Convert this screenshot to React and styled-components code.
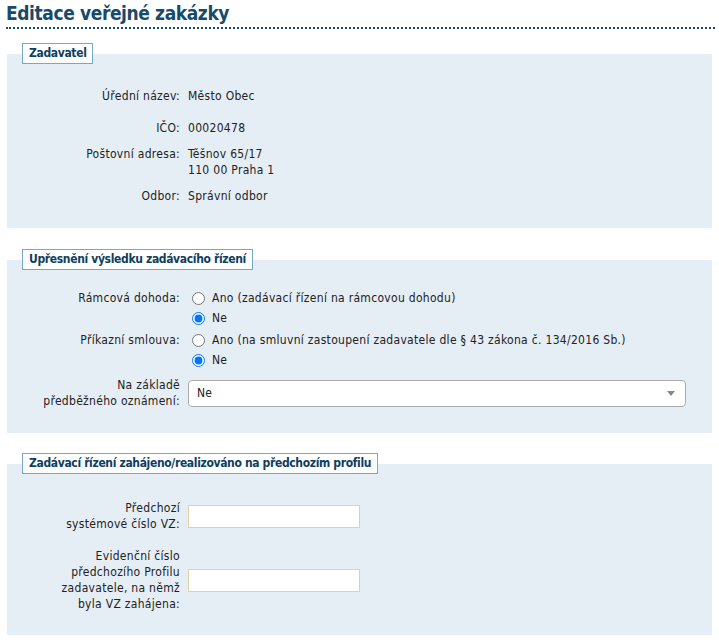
import React from "react";
import styled, { createGlobalStyle } from "styled-components";

const Global = createGlobalStyle`
  html, body { margin: 0; padding: 0; background: #fff; }
  body {
    font-family: Tahoma, "DejaVu Sans Condensed", "DejaVu Sans", sans-serif;
    font-size: 12px;
    letter-spacing: 0.3px;
    color: #222;
  }
  * { box-sizing: border-box; }
`;

const Page = styled.div`
  width: 719px;
  padding: 2px 7px 0 7px;
`;

const Title = styled.h1`
  margin: 0 0 14px -1px;
  padding: 0 0 3px 0;
  font-size: 19px;
  letter-spacing: -0.4px;
  line-height: 22px;
  font-weight: bold;
  color: #174a6c;
  border-bottom: 2px dotted #174a6c;
  width: 709px;
`;

const Fieldset = styled.fieldset`
  margin: 0 0 ${(p) => p.$mb}px 0;
  padding: 0 26px ${(p) => p.$pb}px 0;
  border: none;
  background: #e6eef5;
  width: 705px;
  min-inline-size: 0;
`;

const Legend = styled.legend`
  margin-left: 15px;
  padding: 2px 6px;
  border: 1px solid #74a9c9;
  background: #fff;
  font-weight: bold;
  font-size: 12px;
  letter-spacing: -0.35px;
  line-height: 15px;
  color: #0f3e60;
`;

const Body = styled.div`
  padding-top: ${(p) => p.$pt}px;
  display: flex;
  flex-direction: column;
`;

const Row = styled.div`
  display: grid;
  grid-template-columns: 173px 1fr;
  column-gap: 8px;
  align-items: ${(p) => p.$align || "start"};
  padding: ${(p) => p.$pad || 0}px 0;
  margin-top: ${(p) => p.$mt || 0}px;
  line-height: 16px;
`;

const Label = styled.div`
  text-align: right;
  line-height: ${(p) => p.$lh || 16}px;
`;

const Value = styled.div`
  line-height: 16px;
`;

const RadioGroup = styled.div`
  display: flex;
  flex-direction: column;
`;

const Option = styled.label`
  display: flex;
  align-items: center;
  height: 20px;
  line-height: 20px;
`;

const Radio = styled.input.attrs({ type: "radio" })`
  width: 13px;
  height: 13px;
  margin: 0 7px 0 4px;
`;

const Select = styled.div`
  height: 27px;
  border: 1px solid #aaa;
  border-radius: 4px;
  background: #fff;
  display: flex;
  align-items: center;
  justify-content: space-between;
  padding: 0 10px 0 8px;
`;

const Arrow = styled.span`
  width: 0;
  height: 0;
  border-left: 4px solid transparent;
  border-right: 4px solid transparent;
  border-top: 5px solid #888;
`;

const TextInput = styled.input.attrs({ type: "text" })`
  width: 172px;
  height: 23px;
  border: 1px solid #ddd3a8;
  background: #fff;
  margin: 0;
  padding: 0 4px;
  font: inherit;
`;

export default function App() {
  return (
    <Page>
      <Global />
      <Title>Editace veřejné zakázky</Title>

      <Fieldset $pb={19} $mb={21}>
        <Legend>Zadavatel</Legend>
        <Body $pt={19}>
          <Row $pad={5}>
            <Label>Úřední název:</Label>
            <Value>Město Obec</Value>
          </Row>
          <Row $pad={5} $mt={6}>
            <Label>IČO:</Label>
            <Value>00020478</Value>
          </Row>
          <Row $pad={5}>
            <Label>Poštovní adresa:</Label>
            <Value>
              Těšnov 65/17
              <br />
              110 00 Praha 1
            </Value>
          </Row>
          <Row $pad={5}>
            <Label>Odbor:</Label>
            <Value>Správní odbor</Value>
          </Row>
        </Body>
      </Fieldset>

      <Fieldset $pb={24} $mb={20}>
        <Legend>Upřesnění výsledku zadávacího řízení</Legend>
        <Body $pt={18}>
          <Row>
            <Label $lh={20}>Rámcová dohoda:</Label>
            <RadioGroup>
              <Option>
                <Radio name="ramcova" />
                Ano (zadávací řízení na rámcovou dohodu)
              </Option>
              <Option>
                <Radio name="ramcova" defaultChecked />
                Ne
              </Option>
            </RadioGroup>
          </Row>
          <Row $mt={2}>
            <Label $lh={20}>Příkazní smlouva:</Label>
            <RadioGroup>
              <Option>
                <Radio name="prikazni" />
                Ano (na smluvní zastoupení zadavatele dle § 43 zákona č. 134/2016 Sb.)
              </Option>
              <Option>
                <Radio name="prikazni" defaultChecked />
                Ne
              </Option>
            </RadioGroup>
          </Row>
          <Row $mt={7} $align="center">
            <Label>
              Na základě
              <br />
              předběžného oznámení:
            </Label>
            <Select>
              <span>Ne</span>
              <Arrow />
            </Select>
          </Row>
        </Body>
      </Fieldset>

      <Fieldset $pb={23} $mb={0}>
        <Legend>Zadávací řízení zahájeno/realizováno na předchozím profilu</Legend>
        <Body $pt={26}>
          <Row $align="center">
            <Label>
              Předchozí
              <br />
              systémové číslo VZ:
            </Label>
            <div>
              <TextInput />
            </div>
          </Row>
          <Row $align="center" $mt={16}>
            <Label>
              Evidenční číslo
              <br />
              předchozího Profilu
              <br />
              zadavatele, na němž
              <br />
              byla VZ zahájena:
            </Label>
            <div>
              <TextInput />
            </div>
          </Row>
        </Body>
      </Fieldset>
    </Page>
  );
}
